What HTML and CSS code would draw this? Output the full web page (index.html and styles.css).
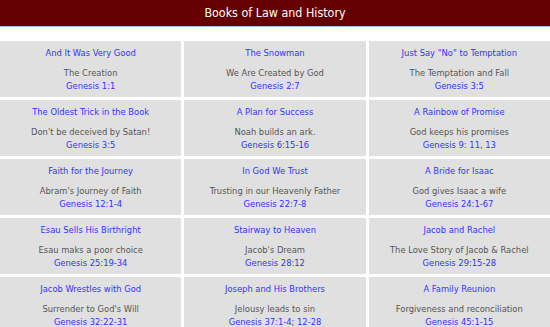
FILE: index.html
```html
<!DOCTYPE html>
<html>
<head>
<meta charset="utf-8">
<link rel="stylesheet" href="styles.css">
</head>
<body>
<header class="banner">Books of Law and History</header>
<main class="grid">
  <div class="cell"><a class="title">And It Was Very Good</a><div class="desc">The Creation</div><a class="ref">Genesis 1:1</a></div>
  <div class="cell"><a class="title">The Snowman</a><div class="desc">We Are Created by God</div><a class="ref">Genesis 2:7</a></div>
  <div class="cell"><a class="title">Just Say "No" to Temptation</a><div class="desc">The Temptation and Fall</div><a class="ref">Genesis 3:5</a></div>
  <div class="cell"><a class="title">The Oldest Trick in the Book</a><div class="desc">Don't be deceived by Satan!</div><a class="ref">Genesis 3:5</a></div>
  <div class="cell"><a class="title">A Plan for Success</a><div class="desc">Noah builds an ark.</div><a class="ref">Genesis 6:15-16</a></div>
  <div class="cell"><a class="title">A Rainbow of Promise</a><div class="desc">God keeps his promises</div><a class="ref">Genesis 9: 11, 13</a></div>
  <div class="cell"><a class="title">Faith for the Journey</a><div class="desc">Abram's Journey of Faith</div><a class="ref">Genesis 12:1-4</a></div>
  <div class="cell"><a class="title">In God We Trust</a><div class="desc">Trusting in our Heavenly Father</div><a class="ref">Genesis 22:7-8</a></div>
  <div class="cell"><a class="title">A Bride for Isaac</a><div class="desc">God gives Isaac a wife</div><a class="ref">Genesis 24:1-67</a></div>
  <div class="cell"><a class="title">Esau Sells His Birthright</a><div class="desc">Esau maks a poor choice</div><a class="ref">Genesis 25:19-34</a></div>
  <div class="cell"><a class="title">Stairway to Heaven</a><div class="desc">Jacob's Dream</div><a class="ref">Genesis 28:12</a></div>
  <div class="cell"><a class="title">Jacob and Rachel</a><div class="desc">The Love Story of Jacob &amp; Rachel</div><a class="ref">Genesis 29:15-28</a></div>
  <div class="cell"><a class="title">Jacob Wrestles with God</a><div class="desc">Surrender to God's Will</div><a class="ref">Genesis 32:22-31</a></div>
  <div class="cell"><a class="title">Joseph and His Brothers</a><div class="desc">Jelousy leads to sin</div><a class="ref">Genesis 37:1-4; 12-28</a></div>
  <div class="cell"><a class="title">A Family Reunion</a><div class="desc">Forgiveness and reconciliation</div><a class="ref">Genesis 45:1-15</a></div>
</main>
</body>
</html>
```
FILE: styles.css
```css
html, body {
  margin: 0;
  padding: 0;
  background: #ffffff;
  font-family: "DejaVu Sans Condensed", "DejaVu Sans", sans-serif;
}
.banner {
  display: block;
  height: 26px;
  line-height: 26px;
  background: #660000;
  color: #ffffff;
  text-align: center;
  font-size: 12.4px;
  border-bottom: 1px solid #a9c4e8;
}
.grid {
  display: grid;
  grid-template-columns: 1fr 1fr 1fr;
  gap: 3px;
  margin-top: 14px;
}
.cell {
  background: #e0e0e0;
  text-align: center;
  padding: 5px 4px;
  font-size: 9.3px;
  display: flex;
  flex-direction: column;
  align-items: center;
}
.title {
  color: #3333ff;
  line-height: 14px;
  margin-bottom: 6px;
}
.desc {
  color: #555555;
  line-height: 13px;
}
.ref {
  color: #3333ff;
  line-height: 13px;
}
```
